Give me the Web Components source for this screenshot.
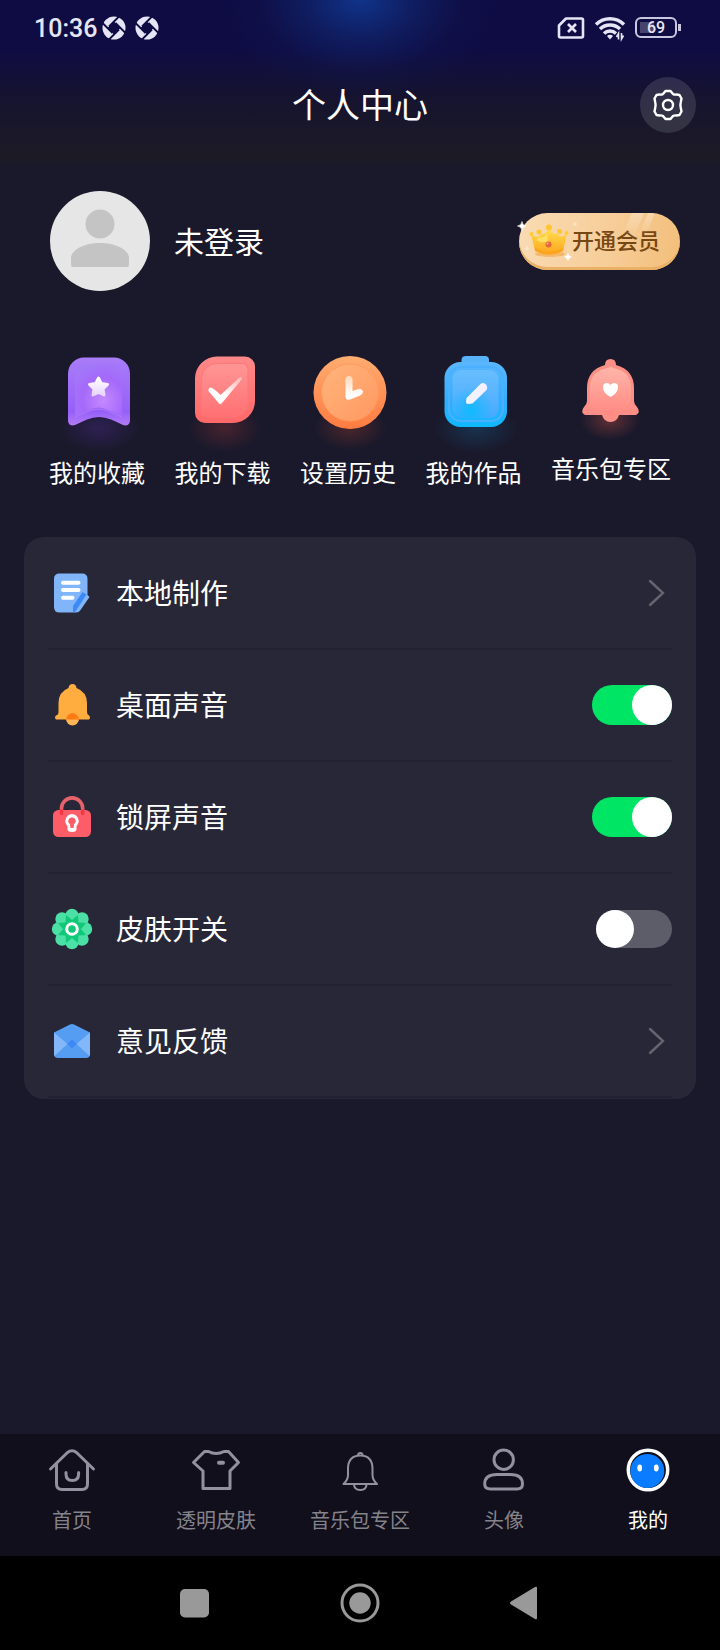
<!DOCTYPE html>
<html lang="zh-CN">
<head>
<meta charset="utf-8">
<meta name="viewport" content="width=device-width, initial-scale=1">
<title>个人中心</title>
<style>
    body {
        margin: 0;
        background: #1a192b;
        color: #ffffff;
        font-family: "Noto Sans CJK SC", sans-serif;
    }
</style>
</head>
<body>
<profile-page>
    <status-bar slot="top" time="10:36" battery="69"></status-bar>
    <page-header slot="top">个人中心</page-header>

    <user-card>未登录</user-card>

    <quick-links>
        <quick-link icon="bookmark">我的收藏</quick-link>
        <quick-link icon="download">我的下载</quick-link>
        <quick-link icon="history">设置历史</quick-link>
        <quick-link icon="works">我的作品</quick-link>
        <quick-link icon="music" compact>音乐包专区</quick-link>
    </quick-links>

    <settings-list>
        <settings-row icon="doc" label="本地制作"></settings-row>
        <settings-row icon="bell" label="桌面声音" type="switch" checked></settings-row>
        <settings-row icon="lock" label="锁屏声音" type="switch" checked></settings-row>
        <settings-row icon="flower" label="皮肤开关" type="switch"></settings-row>
        <settings-row icon="mail" label="意见反馈"></settings-row>
    </settings-list>

    <tab-bar slot="bottom">
        <tab-item icon="home">首页</tab-item>
        <tab-item icon="shirt">透明皮肤</tab-item>
        <tab-item icon="ring">音乐包专区</tab-item>
        <tab-item icon="person">头像</tab-item>
        <tab-item icon="face" active>我的</tab-item>
    </tab-bar>
    <system-nav slot="bottom"></system-nav>
</profile-page>

<script>
    // name: [width, height, markup]
    const icons = {
        pinwheel: [24, 24, `
            <mask id="m">
                <circle cx="12" cy="12" r="11.5" fill="#fff"/>
                <path d="M12 5.5 18.5 12 12 18.5 5.5 12Z" fill="#000"/>
                <path d="M7 10.5 18.5 -1M13.5 7 25 18.5M17 13.5 5.5 25M10.5 17 -1 5.5" stroke="#000" stroke-width="1.8"/>
            </mask>
            <rect width="24" height="24" fill="#e6e5f5" mask="url(#m)"/>`],
        sim: [28, 24, `
            <path d="M9 2.5h15.5a1.5 1.5 0 0 1 1.5 1.5v16a1.5 1.5 0 0 1-1.5 1.5H3.5A1.5 1.5 0 0 1 2 20V9.5Z" fill="none" stroke="#e6e5f5" stroke-width="2.6" stroke-linejoin="round"/>
            <path d="m11 8 8 8m0-8-8 8" stroke="#e6e5f5" stroke-width="2.6"/>`],
        wifi: [32, 24, `
            <g fill="none" stroke="#e6e5f5" stroke-width="3.4">
                <path d="M2 8.5a20 20 0 0 1 28 0"/>
                <path d="M6 13a14.5 14.5 0 0 1 20 0"/>
                <path d="M10 17.5a8.5 8.5 0 0 1 12 0"/>
            </g>
            <path d="M13 20a4 4 0 0 1 6 0l-3 3.5Z" fill="#e6e5f5"/>
            <path d="M24.5 23.5v-6l-2 3.500M27.500 17v6l2-3.500" fill="none" stroke="#e6e5f5" stroke-width="1.6"/>`],
        gear: [32, 32, `
            <g transform="translate(16 16)" fill="none" stroke="#fff" stroke-width="2.4" stroke-linejoin="round">
                <path d="M-2.500-14H2.500L5-11Q6.500-10 8.500-10.500L11.500-10 13.500-6.500 12.800-3Q12 0 12.800 3L13.500 6.500 11.500 10 8.500 10.500Q6.500 10 5 11L2.500 14H-2.500L-5 11Q-6.500 10-8.500 10.500L-11.500 10-13.500 6.500-12.800 3Q-12 0-12.800-3L-13.500-6.500-11.500-10-8.500-10.500Q-6.500-10-5-11Z"/>
                <circle r="5"/>
            </g>`],
        avatar: [100, 100, `
            <circle cx="50" cy="50" r="50" fill="#e6e6e6"/>
            <circle cx="50" cy="33" r="14.5" fill="#c4c4c4"/>
            <path d="M21 74V67C21 59 34 52 50 52S79 59 79 67V74Q79 76 77 76H23Q21 76 21 74Z" fill="#c4c4c4"/>`],
        crown: [160, 56, `
            <defs>
                <linearGradient id="g" x2="0" y2="1"><stop stop-color="#ffe04f"/><stop offset="1" stop-color="#fda51e"/></linearGradient>
                <linearGradient id="h" x2="0" y2="1"><stop stop-color="#fff" stop-opacity=".3"/><stop offset="1" stop-color="#fff" stop-opacity="0"/></linearGradient>
            </defs>
            <path d="M113 0h12l-10 24h-12ZM129 0h7l-10 24h-7Z" fill="url(#h)"/>
            <ellipse cx="31" cy="41" rx="15" ry="3" fill="#f2ad54" opacity=".7"/>
            <circle cx="20" cy="19" r="2.5" fill="#ffc62e"/><circle cx="40.5" cy="18.5" r="2.5" fill="#ffc62e"/>
            <path d="M12 21Q18 26 22 22L20 19Q25 25 30 15Q35 25 40.5 18.5L39 22Q43 26 48 20L44 38Q30 45 16 38Z" fill="url(#g)"/>
            <path d="M16 35Q30 42 44.5 35L44 38Q30 45 16 38Z" fill="#fba51f"/>
            <path d="M21 24Q25 26 28 21L29 28Q23 31 17 27Z" fill="#fff07d" opacity=".6"/>
            <circle cx="12.5" cy="21" r="2" fill="#ffcc35"/><circle cx="30" cy="14.5" r="3" fill="#ffc52e"/><circle cx="47.5" cy="20" r="2" fill="#ffcc35"/>
            <circle cx="29.5" cy="31.5" r="3" fill="#e5653f"/><circle cx="28.5" cy="30.5" r="1" fill="#ffb28b"/>
            <path d="M3 8.5Q3.5 12.5 7 13Q3.5 13.5 3 17.5Q2.5 13.5-1.5 13Q2.5 12.5 3 8.5ZM49 40.5Q49.5 43.5 52.5 44Q49.5 44.5 49 47.5Q48.5 44.5 45.5 44Q48.5 43.5 49 40.5Z" fill="#fff" stroke="#fff" stroke-width=".6"/>
            <path d="M56 8l1 2 2 1-2 1-1 2-1-2-2-1 2-1ZM8 32.5l1 2 2 1-2 1-1 2-1-2-2-1 2-1Z" fill="#fff" opacity=".35"/>`],

        bookmark: [80, 96, `
            <defs>
                <linearGradient id="a" x2="0" y2="1"><stop stop-color="#a97cf8"/><stop offset=".8" stop-color="#9660f8"/><stop offset="1" stop-color="#b47cf6"/></linearGradient>
                <radialGradient id="b" cx=".6" cy=".7" r=".75"><stop stop-color="#c489ff"/><stop offset=".6" stop-color="#a569fb"/><stop offset="1" stop-color="#a278f8"/></radialGradient>
                <linearGradient id="c" x2="0" y2="1"><stop stop-color="#fff"/><stop offset="1" stop-color="#e9d4ff"/></linearGradient>
                <radialGradient id="s"><stop stop-color="#5b32b0" stop-opacity=".3"/><stop offset="1" stop-color="#5b32b0" stop-opacity="0"/></radialGradient>
            </defs>
            <ellipse cx="42" cy="78" rx="40" ry="24" fill="url(#s)"/>
            <path d="M11 23.500A16 16 0 0 1 27 7.500H57A16 16 0 0 1 73 23.500V70Q73 77 66 75Q60 72 54 69.5Q42 64.5 30 69.5L18 75Q11 77 11 70Z" fill="url(#a)"/>
            <path d="M18 24A9.500 9.500 0 0 1 27.500 14.500H55.500A9.500 9.500 0 0 1 65 24V66L51 60Q41.5 55 32 60L18 66Z" fill="url(#b)"/>
            <path d="M18 67L32 61Q41.5 57 51 61L65 67" fill="none" stroke="#b377fb" stroke-width="1"/>
            <path d="m41.500 28 2.600 5.400 6.400 1-4.500 4.500 1 6-5.500-2.500-5.500 2.500 1-6-4.500-4.500 6.400-1Z" fill="url(#c)" stroke="url(#c)" stroke-width="3" stroke-linejoin="round"/>`],
        download: [80, 96, `
            <defs>
                <linearGradient id="a" x2="0" y2="1"><stop stop-color="#ff8989"/><stop offset="1" stop-color="#ff6868"/></linearGradient>
                <linearGradient id="b" x2="0" y2="1"><stop stop-color="#ff9696"/><stop offset="1" stop-color="#ff7072"/></linearGradient>
                <linearGradient id="c" x1="1" x2="0" y2="1"><stop stop-color="#ffb5b0"/><stop offset=".6" stop-color="#fff"/></linearGradient>
                <radialGradient id="s"><stop stop-color="#ad3837" stop-opacity=".3"/><stop offset="1" stop-color="#ad3837" stop-opacity="0"/></radialGradient>
            </defs>
            <ellipse cx="42" cy="78" rx="36" ry="24" fill="url(#s)"/>
            <path d="M12 28.500A22 22 0 0 1 34 6.500H62A10 10 0 0 1 72 16.500V51A22 22 0 0 1 50 73H22A10 10 0 0 1 12 63Z" fill="url(#a)"/>
            <path d="M18.500 29A15.500 15.500 0 0 1 34 13.500H59A6 6 0 0 1 65 19.500V51.500A15.500 15.500 0 0 1 49.500 67H24.500A6 6 0 0 1 18.500 61Z" fill="url(#b)" stroke="#ff7777" stroke-width="1"/>
            <path d="M27.5 37.5Q25 38 25.5 41L36 53.5Q37.5 55 39 53L59 29Q59.5 27 57 27L37.5 45Q29.5 37 27.5 37.5Z" fill="url(#c)"/>`],
        history: [80, 96, `
            <defs>
                <linearGradient id="a" x2="0" y2="1"><stop stop-color="#ffad70"/><stop offset=".5" stop-color="#ff9257"/><stop offset="1" stop-color="#ff7c42"/></linearGradient>
                <linearGradient id="b" x2="1" y2="1"><stop stop-color="#ffb57c"/><stop offset="1" stop-color="#ff9860"/></linearGradient>
                <linearGradient id="c" x2="0" y2="1"><stop stop-color="#ffd7b8"/><stop offset=".8" stop-color="#fff"/></linearGradient>
                <radialGradient id="s"><stop stop-color="#b9442b" stop-opacity=".3"/><stop offset="1" stop-color="#b9442b" stop-opacity="0"/></radialGradient>
            </defs>
            <ellipse cx="42" cy="78" rx="36" ry="22" fill="url(#s)"/>
            <circle cx="42" cy="42.5" r="36.5" fill="url(#a)"/>
            <circle cx="42" cy="42.5" r="28.5" fill="url(#b)" stroke="#ff9b60" stroke-width="1"/>
            <path d="M37.5 30Q37.5 26 41 26T44.5 30V41L50 39Q54 38 55 41.5Q55 44 52 45.5L42 49.5Q37.5 51 37.5 46Z" fill="url(#c)"/>`],
        works: [80, 96, `
            <defs>
                <linearGradient id="a" x2="0" y2="1"><stop stop-color="#5bb6fc"/><stop offset=".6" stop-color="#33adff"/><stop offset="1" stop-color="#0db9ff"/></linearGradient>
                <linearGradient id="b" x2="0" y2="1"><stop stop-color="#68befe"/><stop offset="1" stop-color="#4aa9ff"/></linearGradient>
                <radialGradient id="d" cx=".4" cy=".85" r=".5"><stop stop-color="#10baff"/><stop offset="1" stop-color="#10baff" stop-opacity="0"/></radialGradient>
                <radialGradient id="s"><stop stop-color="#146a9f" stop-opacity=".3"/><stop offset="1" stop-color="#146a9f" stop-opacity="0"/></radialGradient>
            </defs>
            <ellipse cx="42" cy="79" rx="42" ry="24" fill="url(#s)"/>
            <path d="M27.5 16V10Q27.5 6 32 6H51Q55 6 55 10V16Z" fill="#58b2f8"/>
            <rect x="10.5" y="12" width="62.5" height="65" rx="16" fill="url(#a)"/>
            <rect x="15" y="17" width="54" height="54" rx="12" fill="none" stroke="#4bafff" stroke-width="2"/>
            <rect x="18.5" y="20" width="46" height="48" rx="9" fill="url(#b)"/>
            <rect x="18.5" y="20" width="46" height="48" rx="9" fill="url(#d)"/>
            <path d="M32.5 48 46.5 34Q49 32 52 34.5Q54.5 38 52 40.5L38.5 53.5 34 54Q32 54 32 52Z" fill="#f2f2ff"/>`],
        music: [80, 96, `
            <defs>
                <linearGradient id="a" x2="0" y2="1"><stop stop-color="#f98f86"/><stop offset="1" stop-color="#ff8f87"/></linearGradient>
                <linearGradient id="b" x2="0" y2="1"><stop stop-color="#ffb5aa"/><stop offset="1" stop-color="#ff8880"/></linearGradient>
                <radialGradient id="s"><stop stop-color="#c85045" stop-opacity=".4"/><stop offset="1" stop-color="#c85045" stop-opacity="0"/></radialGradient>
            </defs>
            <ellipse cx="39" cy="70" rx="30" ry="20" fill="url(#s)"/>
            <path d="M34 15Q34 9 39.5 9T45 15Q63 20 63 38V51Q63 54 66 57Q70 62 65 65H48Q46 72 39.5 72T31 65H14Q9 62 13 57Q16 54 16 51V38Q16 20 34 15Z" fill="url(#a)"/>
            <path d="M37 18Q39.5 16 42 18Q60 21 60 38V52Q60 57 65 61.5H48Q44 61.5 43 64Q39.5 68 36 64Q35 61.5 31 61.5H14Q19 57 19 52V38Q19 21 37 18Z" fill="url(#b)"/>
            <path d="M39.5 47Q32 43 32 37Q32 33 36 33Q38 33 39.5 35Q41 33 43 33Q47 33 47 37Q47 43 39.5 47Z" fill="#fff"/>`],

        doc: [48, 48, `
            <path d="M6 10Q6 4.5 11.5 4.5H34Q39.5 4.5 39.5 10V26L41.5 28 32.5 41Q31 43.5 28 43.5H11.5Q6 43.5 6 38Z" fill="#80b5fa"/>
            <path d="M34.5 23 25 37V43L27.5 42.5 38.5 25.5Z" fill="#3d8af6"/>
            <path d="M15 13.7H30.5M15 21H30.5M15 28.7H24.5" stroke="#fff" stroke-width="4" stroke-linecap="round"/>`],
        bell: [48, 48, `
            <path d="M20.5 7Q21 3 24.5 3T28.5 7Q39 11 39 22V31Q39 34 41 34.5Q43 36.5 41 38.5H8Q6 36.5 8 34.5Q10.5 34 10.5 31V22Q10.5 11 20.5 7Z" fill="#ffad3f"/>
            <circle cx="24.5" cy="38" r="6.5" fill="#ffb556"/>
            <path d="M18 38.5A6.5 6.5 0 0 1 31 38.5Z" fill="#ff7d10"/>`],
        lock: [48, 48, `
            <rect x="5" y="17" width="38" height="27" rx="5.5" fill="#fc5d68"/>
            <path d="M13.5 20V15.5A10.6 10.6 0 0 1 34.7 15.5V20" fill="none" stroke="#e8626c" stroke-width="3.6"/>
            <path d="M13.5 18V20.5M34.7 18V20.5" stroke="#f23843" stroke-width="3.6" stroke-linecap="round"/>
            <path d="M24 21A7 7 0 0 1 28.5 33V36Q28.5 39 24 39T19.5 36V33A7 7 0 0 1 24 21Z" fill="#fff"/>
            <path d="M24 24.5A3.5 3.5 0 0 1 26 31L25.5 35H22.5L22 31A3.5 3.5 0 0 1 24 24.5Z" fill="#fc5d68"/>`],
        flower: [48, 48, `
            <g transform="translate(24 24)">
                <g fill="#4be0a5">
                    <circle cy="-13.5" r="6.7"/><circle cy="13.5" r="6.7"/><circle cx="-13.5" r="6.7"/><circle cx="13.5" r="6.7"/>
                    <circle cx="10" cy="-10" r="6.7"/><circle cx="10" cy="10" r="6.7"/><circle cx="-10" cy="-10" r="6.7"/><circle cx="-10" cy="10" r="6.7"/>
                </g>
                <path d="M0-9 6-14 6.5-6.5 14-6 9 0 14 6 6.5 6.5 6 14 0 9-6 14-6.5 6.5-14 6-9 0-14-6-6.5-6.5-6-14Z" fill="#10c878"/>
                <circle r="5.3" fill="#10c878" stroke="#fff" stroke-width="3"/>
            </g>`],
        mail: [48, 48, `
            <path d="M6 15.5 22 7.5Q24 6.5 26 7.5L42 15.5V37Q42 41 38 41H10Q6 41 6 37Z" fill="#559df2"/>
            <path d="M6 15.5 19.5 27 6.5 39Q6 38 6 37ZM42 15.5 28.5 27 41.5 39Q42 38 42 37Z" fill="#83b7f9"/>
            <path d="M24 22 28.8 26.7 24 31.5 19.2 26.7Z" fill="#4088f4"/>`],
        chevron: [48, 48, `<path d="M26 12 39 24 26 36" fill="none" stroke="#65646f" stroke-width="2.4" stroke-linecap="round"/>`],

        home: [48, 48, `
            <g fill="none" stroke="#93909f" stroke-width="3" stroke-linecap="round" stroke-linejoin="round">
                <path d="M2.5 23 19.5 6.5Q24 3 28.5 6.5L45.5 23"/>
                <path d="M8.5 18V38Q8.5 43.5 14 43.5H34Q39.5 43.5 39.5 38V18"/>
                <path d="M18 26.5V28Q18 34.5 24.3 34.5T30.6 28V26.5"/>
            </g>`],
        shirt: [48, 48, `
            <g fill="none" stroke="#93909f" stroke-width="3" stroke-linecap="round" stroke-linejoin="round">
                <path d="M12.5 5.5H16.5Q24 9.5 32 5.5H36.5L46.5 16.5 38 25V42.5H11V25L1.5 16.5Z"/>
                <path d="M27 16.7H31" stroke-width="4"/>
            </g>`],
        ring: [48, 48, `
            <g fill="none" stroke="#93909f" stroke-width="2" stroke-linejoin="round">
                <path d="M24.3 9.5Q36.5 9.5 36.5 23V29Q36.5 34 41 38H7.5Q12 34 12 29V23Q12 9.5 24.3 9.5Z"/>
                <path d="M22 9.5Q22 7 24.3 7T26.5 9.5M18 38Q18 44 24.3 44T30.5 38"/>
            </g>`],
        person: [48, 48, `
            <g fill="none" stroke="#93909f" stroke-width="3">
                <circle cx="23.7" cy="13.7" r="9.7"/>
                <path d="M17 28.5H30.5Q42.5 28.5 42.5 38Q42.5 43 37 43H10.5Q4.7 43 4.7 38Q4.7 28.5 17 28.5Z"/>
            </g>`],
        face: [48, 48, `
            <circle cx="24" cy="24" r="19.7" fill="#090d16" stroke="#fff" stroke-width="3.5"/>
            <circle cx="23.3" cy="25" r="17" fill="#0a7cff"/>
            <ellipse cx="15.7" cy="22" rx="2.4" ry="3.4" fill="#fff"/><ellipse cx="32.3" cy="22" rx="2.4" ry="3.4" fill="#fff"/>`],

        recents: [40, 40, `<rect x="6" y="6" width="29" height="28.5" rx="5" fill="#999"/>`],
        circle: [40, 40, `
            <circle cx="20" cy="20" r="18" fill="none" stroke="#999" stroke-width="3"/>
            <circle cx="20" cy="20" r="10.7" fill="#999"/>`],
        back: [40, 40, `<path d="M31 5V35Q31 37 29 36L5 21.5Q3 20 5 18.5L29 4Q31 3 31 5Z" fill="#999"/>`]
    };

    class AppIcon extends HTMLElement {

        constructor() {
            super();
            this.attachShadow({mode: 'open'});
        }

        connectedCallback() {
            const [width, height, markup] = icons[this.getAttribute('name')];

            this.shadowRoot.innerHTML = `
                <style>
                    :host {
                        display: block;
                        flex: none;
                    }
                    svg {
                        display: block;
                        overflow: visible;
                    }
                </style>
                <svg width="${width}" height="${height}" viewBox="0 0 ${width} ${height}" aria-hidden="true">${markup}</svg>
            `;
        }
    }

    class ProfilePage extends HTMLElement {

        constructor() {
            super();
            this.attachShadow({mode: 'open'}).innerHTML = `
                <style>
                    :host {
                        display: flex;
                        flex-direction: column;
                        min-height: 100vh;
                        background:
                            radial-gradient(140px 100px at 50% 0, #10338a, rgba(16, 48, 128, 0.45) 40%, rgba(16, 40, 110, 0.12) 72%, rgba(16, 40, 110, 0)) no-repeat,
                            linear-gradient(#0f0c43 0, #0f0c43 50px, #15132f 96px, #1d1b25 158px, #1a192b 166px) no-repeat;
                    }
                    main {
                        flex: 1;
                        padding: 37px 24px 40px;
                    }
                </style>
                <slot name="top"></slot>
                <main><slot></slot></main>
                <slot name="bottom"></slot>
            `;
        }
    }

    class StatusBar extends HTMLElement {

        constructor() {
            super();
            this.attachShadow({mode: 'open'}).innerHTML = `
                <style>
                    :host {
                        display: flex;
                        align-items: center;
                        justify-content: space-between;
                        height: 55px;
                        padding: 0 43px 0 34px;
                        color: #e6e5f5;
                        font-family: Roboto, sans-serif;
                    }
                    div {
                        display: flex;
                        align-items: center;
                        gap: 9px;
                    }
                    #time {
                        margin-right: -4px;
                        padding-top: 2px;
                        font-size: 25px;
                        font-weight: 500;
                    }
                    #battery {
                        position: relative;
                        box-sizing: border-box;
                        width: 42px;
                        height: 21px;
                        border: 2px solid #c9c7df;
                        border-radius: 6px;
                        background: linear-gradient(90deg, #46446d 14px, transparent 14px) 3px 3px / 100% 11px no-repeat;
                        font-size: 16px;
                        font-weight: 500;
                        line-height: 18px;
                        text-align: center;
                    }
                    #battery::after {
                        content: "";
                        position: absolute;
                        top: 5px;
                        right: -6px;
                        width: 3px;
                        height: 7px;
                        background: #c9c7df;
                    }
                </style>
                <div>
                    <span id="time"></span>
                    <app-icon name="pinwheel"></app-icon>
                    <app-icon name="pinwheel"></app-icon>
                </div>
                <div>
                    <app-icon name="sim"></app-icon>
                    <app-icon name="wifi"></app-icon>
                    <span id="battery"></span>
                </div>
            `;
        }

        connectedCallback() {
            this.shadowRoot.querySelector('#time').textContent = this.getAttribute('time');
            this.shadowRoot.querySelector('#battery').textContent = this.getAttribute('battery');
        }
    }

    class PageHeader extends HTMLElement {

        constructor() {
            super();
            this.attachShadow({mode: 'open'}).innerHTML = `
                <style>
                    :host {
                        display: grid;
                        grid-template-columns: 56px 1fr 56px;
                        align-items: center;
                        height: 99px;
                        padding: 0 24px;
                    }
                    h1 {
                        grid-column: 2;
                        margin: 0;
                        padding-bottom: 2px;
                        font-size: 34px;
                        font-weight: 400;
                        line-height: 48px;
                        text-align: center;
                    }
                    button {
                        display: grid;
                        place-items: center;
                        width: 56px;
                        height: 56px;
                        padding: 0;
                        border: 0;
                        border-radius: 50%;
                        background: rgba(255, 255, 255, 0.12);
                    }
                </style>
                <h1><slot></slot></h1>
                <button aria-label="设置"><app-icon name="gear"></app-icon></button>
            `;
        }
    }

    class UserCard extends HTMLElement {

        constructor() {
            super();
            this.attachShadow({mode: 'open'}).innerHTML = `
                <style>
                    :host {
                        display: flex;
                        align-items: center;
                        gap: 24px;
                        padding: 0 16px 0 26px;
                    }
                    #name {
                        flex: 1;
                        padding-bottom: 2px;
                        font-size: 30px;
                        line-height: 44px;
                    }
                    button {
                        position: relative;
                        height: 57px;
                        padding: 0 20px 5px 53px;
                        border: 0;
                        border-radius: 29px;
                        background: linear-gradient(100deg, #f9dbb3, #f7cf9c 50%, #f3be7a);
                        box-shadow: inset 0 -3px 0 #eab066;
                        color: #754712;
                        font: inherit;
                        font-size: 22px;
                        font-weight: 500;
                        line-height: 32px;
                    }
                    button app-icon {
                        position: absolute;
                        top: 0;
                        left: 0;
                    }
                </style>
                <app-icon name="avatar"></app-icon>
                <span id="name"><slot></slot></span>
                <button><app-icon name="crown"></app-icon>开通会员</button>
            `;
        }
    }

    class QuickLinks extends HTMLElement {

        constructor() {
            super();
            this.attachShadow({mode: 'open'}).innerHTML = `
                <style>
                    :host {
                        display: flex;
                        justify-content: space-between;
                        margin: 59px 0 47px;
                        padding: 0 25px;
                    }
                </style>
                <slot></slot>
            `;
        }
    }

    class QuickLink extends HTMLElement {

        constructor() {
            super();
            this.attachShadow({mode: 'open'});
        }

        connectedCallback() {
            this.shadowRoot.innerHTML = `
                <style>
                    :host {
                        display: block;
                    }
                    a {
                        display: flex;
                        flex-direction: column;
                        align-items: center;
                        gap: 8px;
                        color: inherit;
                        font-size: 24px;
                        line-height: 36px;
                        text-decoration: none;
                    }
                    :host([compact]) a {
                        gap: 4px;
                    }
                </style>
                <a href="#">
                    <app-icon name="${this.getAttribute('icon')}"></app-icon>
                    <span><slot></slot></span>
                </a>
            `;
        }
    }

    class SettingsList extends HTMLElement {

        constructor() {
            super();
            this.attachShadow({mode: 'open'}).innerHTML = `
                <style>
                    :host {
                        display: block;
                        padding: 1px 24px;
                        border-radius: 20px;
                        background: #282738;
                    }
                </style>
                <slot></slot>
            `;
        }
    }

    class SettingsRow extends HTMLElement {

        constructor() {
            super();
            this.attachShadow({mode: 'open'});
        }

        connectedCallback() {
            const isSwitch = this.getAttribute('type') === 'switch';
            const tag = isSwitch ? 'label' : 'a';
            const control = isSwitch
                ? `<input type="checkbox" role="switch" id="toggle" ${this.hasAttribute('checked') ? 'checked' : ''}>`
                : '<app-icon name="chevron"></app-icon>';

            this.shadowRoot.innerHTML = `
                <style>
                    :host {
                        display: block;
                        border-bottom: 2px solid #222131;
                    }
                    .row {
                        display: flex;
                        align-items: center;
                        gap: 20px;
                        height: 110px;
                        color: inherit;
                        font-size: 28px;
                        line-height: 40px;
                        text-decoration: none;
                    }
                    .text {
                        flex: 1;
                        padding-bottom: 2px;
                    }
                    input {
                        appearance: none;
                        display: flex;
                        width: 76px;
                        height: 38px;
                        margin: 0;
                        border-radius: 20px;
                        background: #5d5c69;
                    }
                    input::before {
                        content: "";
                        height: 100%;
                        aspect-ratio: 1;
                        border-radius: 50%;
                        background: #ffffff;
                    }
                    input:checked {
                        justify-content: flex-end;
                        width: 80px;
                        height: 40px;
                        background: #00e564;
                    }
                </style>
                <${tag} class="row" ${isSwitch ? 'for="toggle"' : 'href="#"'}>
                    <app-icon name="${this.getAttribute('icon')}"></app-icon>
                    <span class="text">${this.getAttribute('label')}</span>
                    ${control}
                </${tag}>
            `;
        }
    }

    class TabBar extends HTMLElement {

        constructor() {
            super();
            this.attachShadow({mode: 'open'}).innerHTML = `
                <style>
                    nav {
                        display: grid;
                        grid-auto-flow: column;
                        grid-auto-columns: 1fr;
                        height: 122px;
                        background: #110f1c;
                    }
                </style>
                <nav><slot></slot></nav>
            `;
        }
    }

    class TabItem extends HTMLElement {

        constructor() {
            super();
            this.attachShadow({mode: 'open'});
        }

        connectedCallback() {
            this.shadowRoot.innerHTML = `
                <style>
                    :host {
                        display: block;
                        color: #85838a;
                    }
                    :host([active]) {
                        color: #ffffff;
                    }
                    a {
                        display: flex;
                        flex-direction: column;
                        align-items: center;
                        gap: 11px;
                        padding-top: 12px;
                        color: inherit;
                        font-size: 20px;
                        line-height: 30px;
                        text-decoration: none;
                    }
                </style>
                <a href="#">
                    <app-icon name="${this.getAttribute('icon')}"></app-icon>
                    <span><slot></slot></span>
                </a>
            `;
        }
    }

    class SystemNav extends HTMLElement {

        constructor() {
            super();
            this.attachShadow({mode: 'open'}).innerHTML = `
                <style>
                    :host {
                        display: flex;
                        justify-content: center;
                        height: 94px;
                        background: #000000;
                    }
                    button {
                        display: grid;
                        place-items: center;
                        width: 23%;
                        padding: 0;
                        border: 0;
                        background: none;
                    }
                </style>
                <button aria-label="最近任务"><app-icon name="recents"></app-icon></button>
                <button aria-label="主屏幕"><app-icon name="circle"></app-icon></button>
                <button aria-label="返回"><app-icon name="back"></app-icon></button>
            `;
        }
    }

    customElements.define('app-icon', AppIcon);
    customElements.define('profile-page', ProfilePage);
    customElements.define('status-bar', StatusBar);
    customElements.define('page-header', PageHeader);
    customElements.define('user-card', UserCard);
    customElements.define('quick-links', QuickLinks);
    customElements.define('quick-link', QuickLink);
    customElements.define('settings-list', SettingsList);
    customElements.define('settings-row', SettingsRow);
    customElements.define('tab-bar', TabBar);
    customElements.define('tab-item', TabItem);
    customElements.define('system-nav', SystemNav);
</script>
</body>
</html>
